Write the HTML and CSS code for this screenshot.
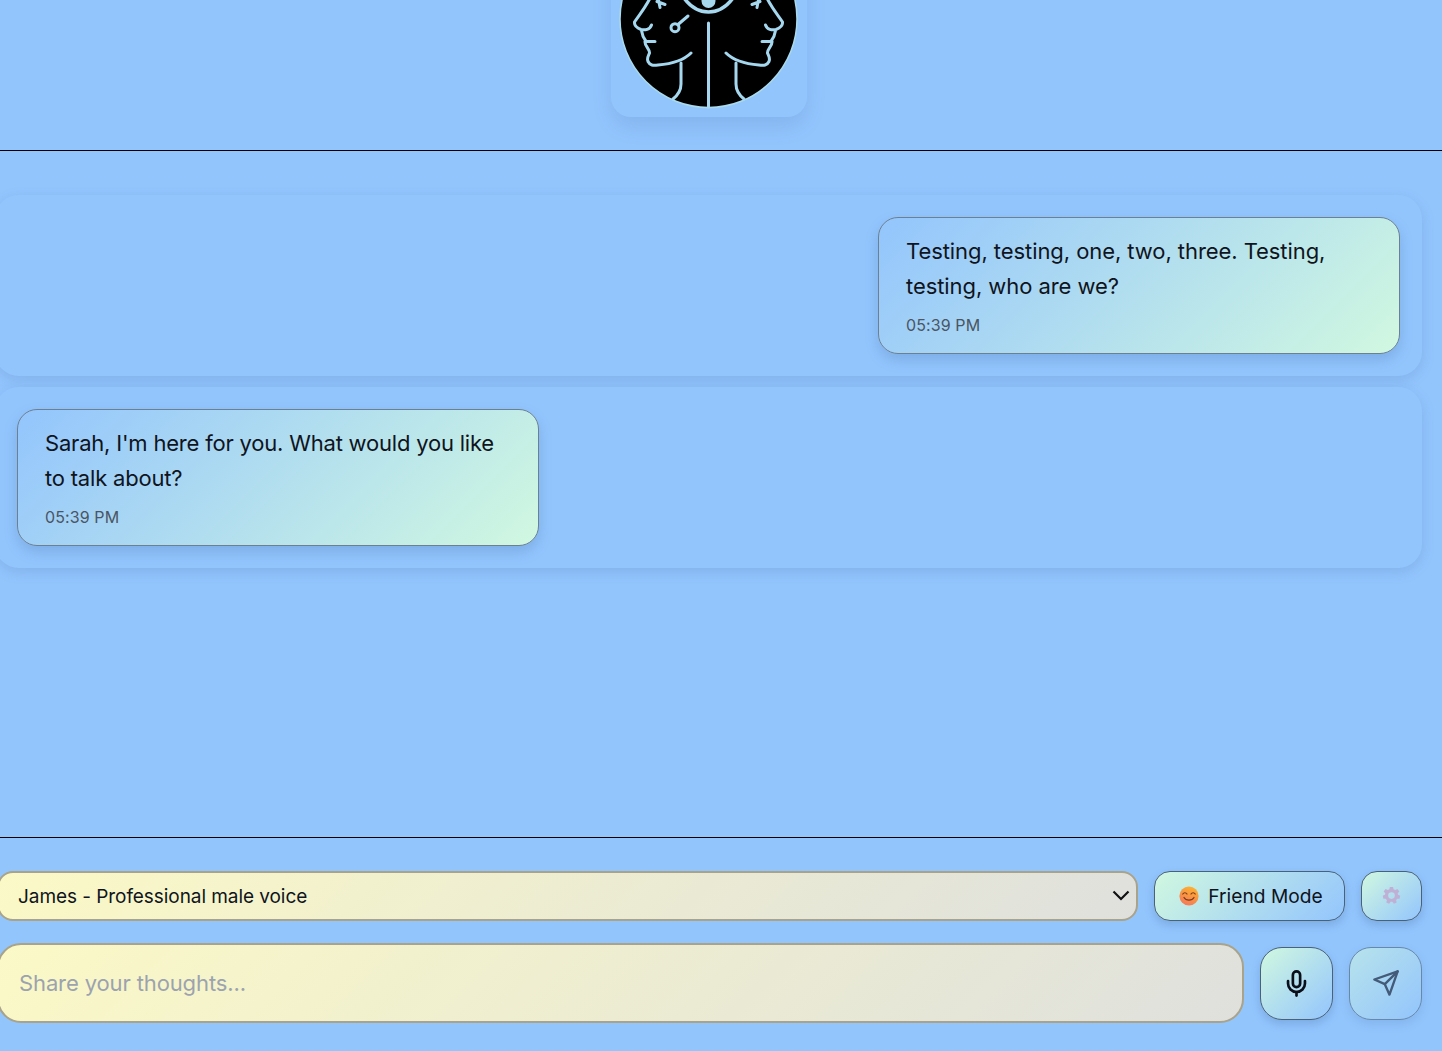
FILE: index.html
```html
<!DOCTYPE html>
<html lang="en">
<head>
<meta charset="utf-8">
<title>Chat</title>
<link rel="stylesheet" href="styles.css">
</head>
<body>
<div class="app">
  <header class="top">
    <div class="logo-card">
      <svg class="logo" viewBox="611 -79 196 196" aria-hidden="true">
        <defs>
          <g id="face">
            <path d="M652 -6C647 6 639 15 634.500 22C634 26 637 28 641 29.500C645 30.500 650 29.500 651.500 25M641.500 30C642 33 642 36 645.500 40.500M655 41.500L645 41.500C644.500 46 650 49 649.500 53C648.500 56 646.500 58 648 61.500C650 65.500 653 65.500 658 65C670 64 683 61 691 53"/>
            <path d="M681 63V84C681 90 678 95 673 99"/>
            <path d="M657 1.500L665 4.500M660 7.500L658 -3"/>
          </g>
        </defs>
        <circle class="disc" cx="708.500" cy="19" r="88.500"/>
        <use href="#face"/>
        <use href="#face" transform="translate(1417 0) scale(-1 1)"/>
        <path class="line" d="M708.500 23V107"/>
        <circle class="line" cx="675" cy="27.700" r="4"/>
        <path class="line" d="M678 24.500L688 16"/>
        <path class="line eye" d="M684 -2C692 9 700 12 708.500 12C717 12 725 9 733 -2"/>
        <circle class="iris" cx="708.500" cy="1" r="7"/>
      </svg>
    </div>
  </header>

  <main class="thread">
    <section class="row row-user">
      <article class="bubble">
        <p class="msg">Testing, testing, one, two, three. Testing, testing, who are we?</p>
        <time class="stamp">05:39 PM</time>
      </article>
    </section>
    <section class="row row-bot">
      <article class="bubble">
        <p class="msg">Sarah, I'm here for you. What would you like to talk about?</p>
        <time class="stamp">05:39 PM</time>
      </article>
    </section>
  </main>

  <footer class="composer">
    <div class="controls">
      <div class="voice">
        <select class="voice-select" aria-label="Voice">
          <option>James - Professional male voice</option>
        </select>
        <svg class="chevron" viewBox="0 0 24 24" aria-hidden="true"><path d="M4.500 8.500L12 16L19.500 8.500"/></svg>
      </div>
      <button class="btn mode" type="button">
        <svg class="emoji" viewBox="0 0 20 20" aria-hidden="true">
          <defs>
            <linearGradient id="smile" x1="0.700" y1="0" x2="0.300" y2="1">
              <stop offset="0" stop-color="#fdb22e"/>
              <stop offset="1" stop-color="#f4785a"/>
            </linearGradient>
          </defs>
          <circle cx="10" cy="10" r="9.600" fill="url(#smile)"/>
          <path class="smile-line" d="M3.800 8C4.800 6.300 7 6.300 8 8M12 8C13 6.300 15.200 6.300 16.200 8M5 11.500C7 15 13 15 15 11.500"/>
        </svg>
        <span>Friend Mode</span>
      </button>
      <button class="btn gear" type="button" aria-label="Settings">
        <svg class="gear-icon" viewBox="0 0 20 20" aria-hidden="true">
          <path fill-rule="evenodd" d="M8.300 1H11.700L12.200 3.500L13.900 4.300L16.200 3.100L18.300 5.700L16.500 7.500L16.900 9.300L19.200 10.300L18.500 13.500L16 13.400L14.800 14.900L15.500 17.300L12.500 18.800L11 16.700H9L7.500 18.800L4.500 17.300L5.200 14.900L4 13.400L1.500 13.500L0.800 10.300L3.100 9.300L3.500 7.500L1.700 5.700L3.800 3.100L6.100 4.300L7.800 3.500ZM10 6.600A3.500 3.500 0 1 0 10 13.600A3.500 3.500 0 1 0 10 6.600Z"/>
        </svg>
      </button>
    </div>
    <div class="entry">
      <input class="thought" type="text" placeholder="Share your thoughts...">
      <button class="btn square" type="button" aria-label="Record">
        <svg class="icon mic" viewBox="0 0 24 24" aria-hidden="true">
          <path d="M12 2a3 3 0 0 0-3 3v7a3 3 0 0 0 6 0V5a3 3 0 0 0-3-3Z"/>
          <path d="M19 10v2a7 7 0 0 1-14 0v-2"/>
          <path d="M12 19v3"/>
        </svg>
      </button>
      <button class="btn square send" type="button" aria-label="Send">
        <svg class="icon plane" viewBox="0 0 24 24" aria-hidden="true">
          <path d="M22 2L11 13"/>
          <path d="M22 2L15 22L11 13L2 9Z"/>
        </svg>
      </button>
    </div>
  </footer>
</div>
</body>
</html>
```

FILE: styles.css
```css
* { box-sizing: border-box; }

html, body {
  margin: 0;
  height: 100%;
  overflow: hidden;
}

body {
  background: #93c5fd;
  font-family: Inter, "Liberation Sans", sans-serif;
  font-optical-sizing: none;
  color: #0f1420;
}

.app {
  display: flex;
  flex-direction: column;
  height: 1051px;
  overflow: hidden;
}

.top {
  flex: none;
  height: 151px;
  border-bottom: 1px solid #000;
  display: flex;
  justify-content: center;
  padding-right: 24px;
}

.logo-card {
  width: 196px;
  height: 196px;
  margin-top: -79px;
  background: #93c5fd;
  border-radius: 20px;
  box-shadow: 0 10px 20px rgba(30, 64, 120, 0.12);
}

.logo {
  display: block;
  width: 196px;
  height: 196px;
  fill: none;
  stroke: #a5d8ee;
  stroke-width: 3;
  stroke-linecap: round;
  stroke-linejoin: round;
}

.disc {
  fill: #000;
  stroke: #a9dbec;
  stroke-width: 1.500;
}

.line { fill: none; stroke: #a5d8ee; }

.eye { stroke-width: 3.500; }

.iris { fill: #a5d8ee; stroke: none; }

.thread {
  flex: 1;
  margin-left: -5px;
  padding: 43.700px 20px 0 0;
  display: flex;
  flex-direction: column;
  gap: 11px;
}

.row {
  display: flex;
  padding: 22px 22px 21.600px;
  border-radius: 24px;
  background: #93c5fd;
  box-shadow: 0 4px 14px rgba(30, 64, 120, 0.14);
}

.row-user { justify-content: flex-end; }

.bubble {
  width: 522px;
  height: 137.600px;
  padding: 16px 27px 0;
  border: 1px solid #6d8090;
  border-radius: 20px;
  background: linear-gradient(135deg, #93c5fd, #d1f8e0);
  box-shadow: 0 6px 14px rgba(30, 64, 120, 0.18);
}

.msg {
  margin: 0;
  font-size: 22px;
  line-height: 35.200px;
  letter-spacing: -0.070px;
  color: #0f1420;
}

.row-bot .msg { letter-spacing: -0.200px; }

.stamp {
  display: block;
  margin-top: 10px;
  font-size: 16px;
  line-height: 22px;
  letter-spacing: 0.100px;
  color: #4b5563;
}

.composer {
  flex: none;
  height: 214px;
  border-top: 1px solid #000;
  padding: 33px 20px 0 0;
  display: flex;
  flex-direction: column;
  gap: 22px;
}

.controls {
  display: flex;
  gap: 16px;
  height: 50px;
  margin-left: -3px;
}

.voice {
  flex: 1;
  position: relative;
}

.voice-select {
  width: 100%;
  height: 50px;
  appearance: none;
  padding: 0 40px 0 19px;
  border: 2px solid #a8a38a;
  border-radius: 16px;
  background: linear-gradient(135deg, #fbf9c6, #dfe0dd);
  font-family: inherit;
  font-size: 19px;
  letter-spacing: -0.060px;
  color: #0f1420;
}

.chevron {
  position: absolute;
  right: 5px;
  top: 12px;
  width: 24px;
  height: 24px;
  fill: none;
  stroke: #111;
  stroke-width: 2.200;
}

.btn {
  display: flex;
  align-items: center;
  justify-content: center;
  padding: 0;
  border: 1px solid #4a6176;
  background: linear-gradient(135deg, #d1f8e0, #93c5fd);
  box-shadow: 0 4px 10px rgba(30, 64, 120, 0.2);
  color: #0f1420;
  font-family: inherit;
}

.mode {
  width: 191px;
  gap: 9px;
  padding-left: 3px;
  border-radius: 16px;
  font-size: 19.200px;
  font-weight: 400;
}

.emoji { width: 20px; height: 20px; }

.smile-line {
  fill: none;
  stroke: #7a3a1c;
  stroke-width: 1.200;
  stroke-linecap: round;
}

.gear {
  width: 61px;
  border-radius: 16px;
  padding-bottom: 2px;
}

.gear-icon {
  width: 19px;
  height: 19px;
  fill: #bfb0d6;
}

.entry {
  display: flex;
  align-items: center;
  gap: 16px;
  margin-left: -3px;
  height: 80px;
}

.thought {
  flex: 1;
  height: 80px;
  padding: 0 20px;
  border: 2px solid #a8a38a;
  border-radius: 24px;
  background: linear-gradient(135deg, #fbf9c6, #dfe0dd);
  font-family: inherit;
  font-size: 22px;
  letter-spacing: -0.120px;
  outline: none;
}

.thought::placeholder {
  color: #9ca3af;
  opacity: 1;
}

.square {
  flex: none;
  width: 73px;
  height: 73px;
  border-radius: 22px;
}

.icon {
  fill: none;
  stroke: currentColor;
  stroke-width: 2;
  stroke-linecap: round;
  stroke-linejoin: round;
}

.mic { width: 29px; height: 29px; color: #0b0f19; stroke-width: 2.200; }

.plane { width: 28px; height: 28px; }

.send { opacity: 0.6; }
```
